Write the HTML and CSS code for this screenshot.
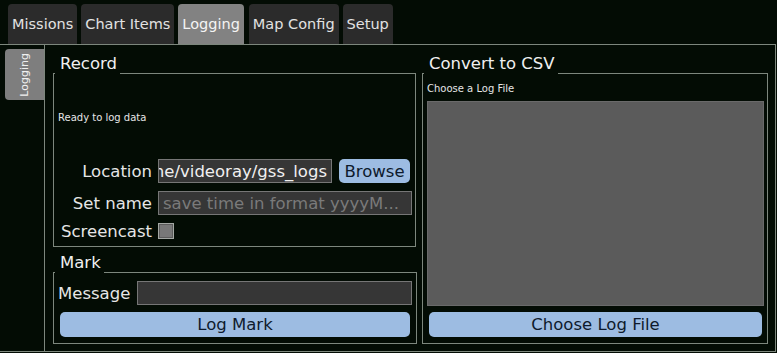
FILE: index.html
```html
<!DOCTYPE html>
<html lang="en">
<head>
    <meta charset="UTF-8">
    <meta name="viewport" content="width=device-width, initial-scale=1.0">
    <title>Logging</title>
    <link rel="stylesheet" href="styles.css">
</head>
<body>
    <div class="tabbar">
        <div class="tab">Missions</div>
        <div class="tab">Chart Items</div>
        <div class="tab active">Logging</div>
        <div class="tab">Map Config</div>
        <div class="tab">Setup</div>
    </div>

    <div class="frame">
        <div class="side">
            <div class="side-tab"><span>Logging</span></div>
        </div>

        <div class="panel">
            <div class="column">
                <div class="group record">
                    <div class="group-title">Record</div>
                    <div class="group-box record-box">
                        <div class="status">Ready to log data</div>
                        <div class="form">
                            <label>Location</label>
                            <div class="row">
                                <div class="field path"><span>/home/videoray/gss_logs</span></div>
                                <button class="btn browse">Browse</button>
                            </div>
                            <label>Set name</label>
                            <input class="field" type="text" placeholder="save time in format yyyyM...">
                            <label>Screencast</label>
                            <div class="row"><span class="check"></span></div>
                        </div>
                    </div>
                </div>

                <div class="group">
                    <div class="group-title">Mark</div>
                    <div class="group-box mark-box">
                        <div class="message-row">
                            <label>Message</label>
                            <input class="field" type="text">
                        </div>
                        <button class="btn wide">Log Mark</button>
                    </div>
                </div>
            </div>

            <div class="column">
                <div class="group convert">
                    <div class="group-title">Convert to CSV</div>
                    <div class="group-box convert-box">
                        <div class="small">Choose a Log File</div>
                        <div class="file-list"></div>
                        <button class="btn wide">Choose Log File</button>
                    </div>
                </div>
            </div>
        </div>
    </div>
</body>
</html>
```

FILE: styles.css
```css
* {
    margin: 0;
    padding: 0;
    box-sizing: border-box;
}

body {
    background-color: #030c04;
    color: #e6e6e6;
    font-family: "DejaVu Sans", sans-serif;
    font-size: 16.5px;
    width: 777px;
    height: 353px;
    overflow: hidden;
}

/* top tabs */
.tabbar {
    display: flex;
    gap: 4px;
    height: 44px;
    padding: 4px 0 0 8px;
}

.tab {
    height: 40px;
    line-height: 40px;
    padding: 0 4px;
    font-size: 14.5px;
    background-color: #2b2b2b;
    color: #e2e2e2;
    border-radius: 4px 4px 0 0;
}

.tab.active {
    background-color: #828282;
    color: #f4f4f4;
    margin-right: 1px;
}

/* frame */
.frame {
    display: flex;
    width: 776px;
    height: 308px;
    border-top: 1px solid #7d877d;
    border-right: 1px solid #7d877d;
    border-bottom: 1px solid #7d877d;
}

.side {
    width: 44px;
    padding: 4px 0 0 5px;
}

.side-tab {
    height: 51px;
    background-color: #7e7e7e;
    border-radius: 4px 0 0 4px;
    display: flex;
    align-items: center;
    justify-content: center;
}

.side-tab span {
    writing-mode: vertical-rl;
    transform: rotate(180deg);
    font-size: 11px;
    color: #f0f0f0;
}

.panel {
    flex: 1;
    min-width: 0;
    border-left: 1px solid #7d877d;
    padding: 8px 7px 7px 8px;
    display: grid;
    grid-template-columns: 364px minmax(0, 1fr);
    gap: 5px;
}

.column {
    display: flex;
    flex-direction: column;
    gap: 5px;
    min-width: 0;
}

/* group boxes */
.group {
    display: flex;
    flex-direction: column;
    align-items: flex-start;
}

.group.record,
.group.convert {
    flex: 1;
}

.group-title {
    position: relative;
    z-index: 1;
    height: 21px;
    line-height: 21px;
    margin: 0 0 -1px 2px;
    padding: 0 3px 0 5px;
    background-color: #030c04;
    color: #f0f0f0;
}

.group-box {
    align-self: stretch;
    flex: 1;
    min-width: 0;
    border: 1px solid #7d877d;
    display: flex;
    flex-direction: column;
}

.record-box {
    margin-right: 1px;
    padding: 9px 3px 7px 4px;
}

.status {
    flex: 1;
    display: flex;
    align-items: center;
    font-size: 10px;
    margin-bottom: 8px;
}

.form {
    display: grid;
    grid-template-columns: 94px minmax(0, 1fr);
    grid-template-rows: 24px 24px 16px;
    column-gap: 6px;
    row-gap: 8px;
    align-items: center;
}

.form label {
    text-align: right;
    white-space: nowrap;
}

.row {
    display: flex;
    gap: 7px;
    height: 100%;
    align-items: center;
    min-width: 0;
}

.field {
    height: 24px;
    min-width: 0;
    background-color: #363636;
    border: 1px solid #767676;
    color: #f0f0f0;
    font-family: "DejaVu Sans", sans-serif;
    font-size: 16.5px;
    padding: 0 4px;
    outline: none;
    width: 100%;
}

.field::placeholder {
    color: #7a7a7a;
}

.path {
    flex: 1;
    display: flex;
    justify-content: flex-end;
    align-items: center;
    overflow: hidden;
    white-space: nowrap;
}

.path span {
    flex-shrink: 0;
}

.check {
    width: 16px;
    height: 16px;
    background-color: #787878;
    border: 1px solid #a4a8a4;
    box-shadow: inset 0 0 0 1px #5c5c5c;
}

.btn {
    background-color: #9dbce2;
    color: #0e1a2c;
    border: none;
    border-radius: 5px;
    font-family: "DejaVu Sans", sans-serif;
    font-size: 16.5px;
    height: 25px;
}

.browse {
    flex-shrink: 0;
    width: 71px;
    height: 24px;
    margin-right: 2px;
}

.wide {
    margin: 0 2px;
}

.mark-box {
    padding: 8px 4px 6px 4px;
    gap: 7px;
}

.message-row {
    display: flex;
    align-items: center;
    gap: 7px;
}

.message-row .field {
    flex: 1;
}

.convert-box {
    padding: 8px 3px 6px 4px;
}

.small {
    font-size: 10px;
    line-height: 14px;
    margin-bottom: 5px;
}

.file-list {
    flex: 1;
    background-color: #5b5b5b;
    border: 1px solid #6a6a6a;
    margin-bottom: 6px;
}
```
